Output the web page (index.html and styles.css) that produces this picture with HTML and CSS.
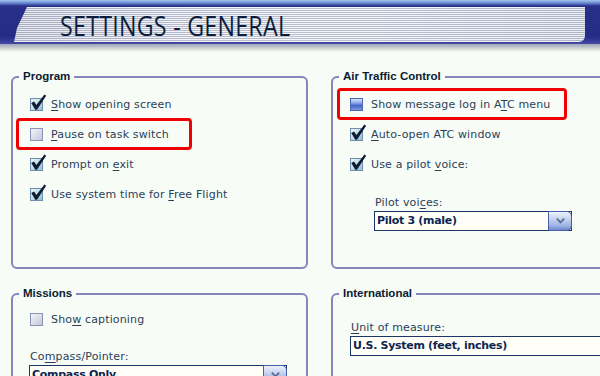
FILE: index.html
```html
<!DOCTYPE html>
<html>
<head>
<meta charset="utf-8">
<link rel="stylesheet" href="styles.css">
</head>
<body>
<header class="hdr">
  <div class="panel"><h1 class="title">SETTINGS - GENERAL</h1></div>
</header>
<div class="shade"></div>
<main class="grid">
  <fieldset class="group">
    <legend class="legend">Program</legend>
    <div class="rows">
      <div class="row"><span class="cb on"><svg class="tick" viewBox="0 0 16 16"><path d="M1.2 8.4 L3.8 7 L6 10.4 L13.6 0.4 L15.2 1.6 L6.6 14.8 L5 14.8 Z"/></svg></span><span class="lbl"><u>S</u>how opening screen</span></div>
      <div class="row hl hl-left"><span class="cb"></span><span class="lbl"><u>P</u>ause on task switch</span></div>
      <div class="row"><span class="cb on"><svg class="tick" viewBox="0 0 16 16"><path d="M1.2 8.4 L3.8 7 L6 10.4 L13.6 0.4 L15.2 1.6 L6.6 14.8 L5 14.8 Z"/></svg></span><span class="lbl">Prompt on <u>e</u>xit</span></div>
      <div class="row"><span class="cb on"><svg class="tick" viewBox="0 0 16 16"><path d="M1.2 8.4 L3.8 7 L6 10.4 L13.6 0.4 L15.2 1.6 L6.6 14.8 L5 14.8 Z"/></svg></span><span class="lbl">Use system time for <u>F</u>ree Flight</span></div>
    </div>
  </fieldset>
  <fieldset class="group">
    <legend class="legend">Air Traffic Control</legend>
    <div class="rows">
      <div class="row hl hl-right"><span class="cb focus"></span><span class="lbl">Show message log in A<u>T</u>C menu</span></div>
      <div class="row"><span class="cb on"><svg class="tick" viewBox="0 0 16 16"><path d="M1.2 8.4 L3.8 7 L6 10.4 L13.6 0.4 L15.2 1.6 L6.6 14.8 L5 14.8 Z"/></svg></span><span class="lbl"><u>A</u>uto-open ATC window</span></div>
      <div class="row"><span class="cb on"><svg class="tick" viewBox="0 0 16 16"><path d="M1.2 8.4 L3.8 7 L6 10.4 L13.6 0.4 L15.2 1.6 L6.6 14.8 L5 14.8 Z"/></svg></span><span class="lbl">Use a pilot <u>v</u>oice:</span></div>
      <div class="field voices">
        <div class="flabel">Pilot voi<u>c</u>es:</div>
        <div class="select w198"><span class="val">Pilot 3 (male)</span><span class="btn"><svg viewBox="0 0 12 8"><path d="M2 1.5 L6 5.5 L10 1.5"/></svg></span></div>
      </div>
    </div>
  </fieldset>
  <fieldset class="group">
    <legend class="legend">Missions</legend>
    <div class="rows tight">
      <div class="row"><span class="cb"></span><span class="lbl">Sho<u>w</u> captioning</span></div>
      <div class="field compass">
        <div class="flabel">Co<u>m</u>pass/Pointer:</div>
        <div class="select w258"><span class="val">Compass Only</span><span class="btn"><svg viewBox="0 0 12 8"><path d="M2 1.5 L6 5.5 L10 1.5"/></svg></span></div>
      </div>
    </div>
  </fieldset>
  <fieldset class="group">
    <legend class="legend">International</legend>
    <div class="rows">
      <div class="field unit">
        <div class="flabel"><u>U</u>nit of measure:</div>
        <div class="select w300"><span class="val">U.S. System (feet, inches)</span><span class="btn"><svg viewBox="0 0 12 8"><path d="M2 1.5 L6 5.5 L10 1.5"/></svg></span></div>
        <div class="flabel note">Select the default hemisphere for latitude and longitude:</div>
      </div>
    </div>
  </fieldset>
</main>
</body>
</html>
```

FILE: styles.css
```css
html, body {
  margin: 0;
  padding: 0;
  width: 600px;
  height: 376px;
  overflow: hidden;
  background: #f7fcf6;
  font-family: "DejaVu Sans", Verdana, sans-serif;
  font-size: 11px;
  letter-spacing: 0.15px;
  color: #2a3f5a;
}

.hdr {
  height: 44px;
  box-sizing: border-box;
  padding: 7px 15px 2px 14px;
  background: linear-gradient(#a4c6f0 0, #6a8ad0 3px, #28308a 6px, #232b84 36px, #3a3e9c 42px, #4a4ea8 44px);
}

.panel {
  height: 35px;
  clip-path: polygon(13px 0, 100% 0, 100% 100%, 0 100%, 3px 60%);
  border-radius: 0 0 6px 0;
  background:
    repeating-linear-gradient(180deg, rgba(255,255,255,0.6) 0 1px, rgba(140,148,172,0.5) 1px 2px),
    linear-gradient(90deg, #c4c8d6 0%, #dfe3ec 30%, #e6eaf2 60%, #d2d6e2 100%);
  padding-left: 46px;
  display: flex;
  align-items: center;
}

.title {
  margin: 0;
  font-family: "Open Sans", sans-serif;
  font-weight: 400;
  font-size: 27px;
  letter-spacing: 0.3px;
  color: #0c1c3a;
  line-height: 1;
  padding-top: 2px;
  transform: scaleX(0.86);
  transform-origin: left center;
  white-space: nowrap;
}

.shade {
  height: 8px;
  background: linear-gradient(#9ea5b6, #d6dad8 5px, #f7fcf6);
}

.grid {
  display: grid;
  grid-template-columns: 297px 297px;
  column-gap: 23px;
  row-gap: 18px;
  padding-left: 11px;
  margin-top: 18px;
}

.group {
  margin: 0;
  padding: 0 0 0 6px;
  height: 199px;
  box-sizing: border-box;
  border: 2px solid #8486bc;
  border-radius: 6px;
  min-width: 0;
}

.legend {
  padding: 0 4px;
  font-family: "Liberation Sans", Arial, sans-serif;
  font-weight: 700;
  font-size: 11.5px;
  line-height: 13px;
  letter-spacing: 0;
  color: #0b1b33;
}

.rows {
  display: flex;
  flex-direction: column;
  padding: 6px 0 0 11px;
}
.rows.tight { padding-top: 4px; }

.row {
  position: relative;
  display: flex;
  align-items: center;
  gap: 8px;
  height: 30px;
}

.lbl u, .flabel u { text-decoration-thickness: 1px; text-underline-offset: 2px; }

.hl::after {
  content: "";
  position: absolute;
  height: 32px;
  box-sizing: border-box;
  border: 3px solid #f00000;
  border-radius: 4px;
  top: -1px;
}
.hl-left::after { left: -14px; width: 176px; }
.hl-right::after { left: -13px; width: 230px; }

.cb {
  position: relative;
  flex: none;
  width: 13px;
  height: 13px;
  box-sizing: border-box;
  border: 1px solid #8a94b6;
  background: linear-gradient(135deg, #f4f4f8 0%, #d6d9e6 60%, #c2c6da 100%);
}
.cb.on {
  border-color: #6e8eac;
  background: linear-gradient(135deg, #eef8fa 0%, #bcdbe4 55%, #94bccc 100%);
}
.cb.focus {
  border-color: #4a68b0;
  background: linear-gradient(180deg, #dbe6fa 0%, #8ea8e8 35%, #4664c4 60%, #7e98dc 100%);
}
.tick {
  position: absolute;
  left: -1px;
  top: -5px;
  width: 17px;
  height: 17px;
  fill: #0e1c36;
}

.field { display: flex; flex-direction: column; }
.voices { padding: 16px 0 0 25px; }
.compass { padding: 15px 0 0 0; }
.unit { padding: 14px 0 0 1px; }

.flabel {
  line-height: 15px;
  height: 15px;
  margin-bottom: 1px;
}
.note { margin-top: 17px; }

.select {
  display: flex;
  height: 20px;
  box-sizing: border-box;
  border: 1px solid #1a3668;
  background: #fffff8;
  margin-left: -1px;
}
.w198 { width: 198px; }
.w258 { width: 258px; }
.w300 { width: 300px; }

.val {
  flex: 1;
  padding-left: 2px;
  font-weight: 700;
  font-size: 11px;
  line-height: 18px;
  letter-spacing: -0.3px;
  color: #0e2450;
  white-space: nowrap;
  overflow: hidden;
}

.btn {
  flex: none;
  width: 22px;
  margin: -1px -1px -1px 0;
  border: 1px solid #4660a8;
  border-radius: 0 5px 5px 0;
  background: linear-gradient(180deg, #eef3fc 0%, #c4d2f0 40%, #9fb4e4 75%, #7088cc 100%);
  display: flex;
  align-items: center;
  justify-content: center;
}
.btn svg {
  width: 11px;
  height: 8px;
  fill: none;
  stroke: #5a6e94;
  stroke-width: 2;
}
```
